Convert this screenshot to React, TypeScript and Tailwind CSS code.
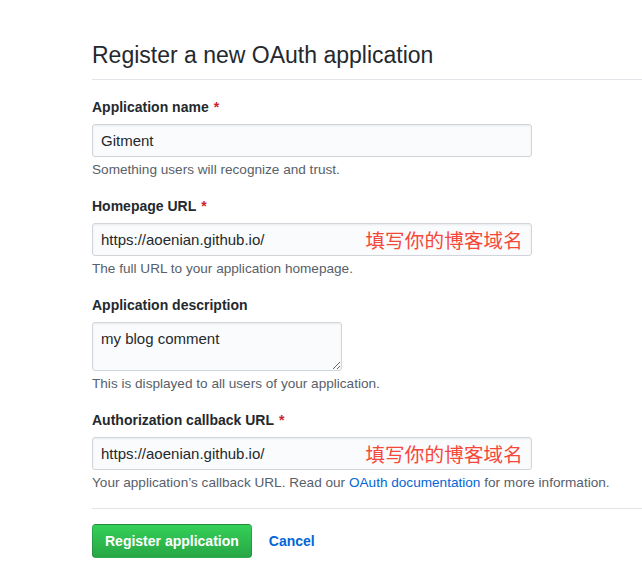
import React from "react";

const FONT = '"Liberation Sans", Arial, "Noto Sans CJK SC", sans-serif';

function Label({ text, required }: { text: string; required?: boolean }) {
  return (
    <label className="block text-[14px] leading-[20px] font-bold text-[#24292e]">
      {text}
      {required && <span className="ml-[5px] text-[#cb2431]">*</span>}
    </label>
  );
}

function Hint({ children }: { children: React.ReactNode }) {
  return <p className="mt-[5px] text-[13.6px] leading-[16px] text-[#586069]">{children}</p>;
}

function UrlInput({ value, note }: { value: string; note?: string }) {
  return (
    <div className="relative mt-[7px] w-[440px]">
      <input
        defaultValue={value}
        className="block h-[33px] w-full rounded-[3px] border border-[#d1d5da] bg-[#fafbfc] px-[8px] text-[15px] leading-[20px] text-[#24292e] shadow-[inset_0_1px_2px_rgba(27,31,35,0.075)] outline-none"
        style={{ fontFamily: FONT }}
      />
      {note && (
        <span
          className="pointer-events-none absolute right-[9px] top-0 flex h-[33px] items-center text-[19.5px] tracking-[0.2px] text-[#f5473a]"
          style={{ fontFamily: '"Noto Sans CJK SC", sans-serif' }}
        >
          {note}
        </span>
      )}
    </div>
  );
}

export default function App() {
  return (
    <div className="min-h-screen bg-white pl-[92px] pt-[37px]" style={{ fontFamily: FONT }}>
      {/* Heading */}
      <h1 className="border-b border-[#e1e4e8] pb-[6px] text-[23px] leading-[36px] font-normal text-[#24292e]">
        Register a new OAuth application
      </h1>

      <form className="pt-[17px]">
        <div className="mb-[18px]">
          <Label text="Application name" required />
          <UrlInput value="Gitment" />
          <Hint>Something users will recognize and trust.</Hint>
        </div>

        <div className="mb-[18px]">
          <Label text="Homepage URL" required />
          <UrlInput value="https://aoenian.github.io/" note="填写你的博客域名" />
          <Hint>The full URL to your application homepage.</Hint>
        </div>

        <div className="mb-[18px]">
          <Label text="Application description" />
          <textarea
            defaultValue="my blog comment"
            className="mt-[7px] block h-[49px] w-[250px] rounded-[3px] border border-[#d1d5da] bg-[#fafbfc] px-[8px] py-[6px] text-[15px] leading-[20px] text-[#24292e] shadow-[inset_0_1px_2px_rgba(27,31,35,0.075)] outline-none"
            style={{ fontFamily: FONT }}
          />
          <Hint>This is displayed to all users of your application.</Hint>
        </div>

        <div>
          <Label text="Authorization callback URL" required />
          <UrlInput value="https://aoenian.github.io/" note="填写你的博客域名" />
          <Hint>
            Your application’s callback URL. Read our{" "}
            <a className="text-[#0366d6]">OAuth documentation</a> for more information.
          </Hint>
        </div>

        <div className="mt-[17px] border-t border-[#e1e4e8] pt-[15px] flex items-center gap-[17px]">
          <button
            type="button"
            className="h-[34px] rounded-[4px] border border-[rgba(27,31,35,0.2)] bg-gradient-to-b from-[#34d058] to-[#28a745] px-[12px] text-[14px] leading-[20px] font-bold text-white"
          >
            Register application
          </button>
          <a className="text-[14px] font-bold text-[#0366d6]">Cancel</a>
        </div>
      </form>
    </div>
  );
}
